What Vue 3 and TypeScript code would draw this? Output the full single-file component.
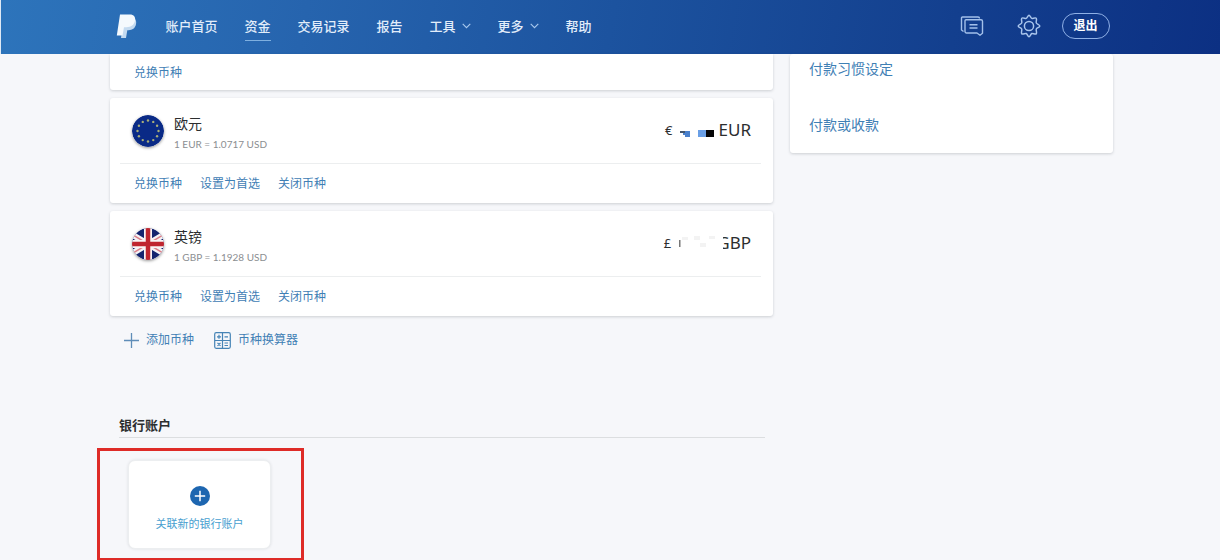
<script setup lang="ts">
interface NavItem {
  label: string
  active?: boolean
  menu?: boolean
}

interface Currency {
  code: 'EUR' | 'GBP'
  name: string
  rate: string
  symbol: string
}

const navItems: NavItem[] = [
  { label: '账户首页' },
  { label: '资金', active: true },
  { label: '交易记录' },
  { label: '报告' },
  { label: '工具', menu: true },
  { label: '更多', menu: true },
  { label: '帮助' },
]

const currencies: Currency[] = [
  { code: 'EUR', name: '欧元', rate: '1 EUR = 1.0717 USD', symbol: '€' },
  { code: 'GBP', name: '英镑', rate: '1 GBP = 1.1928 USD', symbol: '£' },
]

const currencyActions: string[] = ['兑换币种', '设置为首选', '关闭币种']
const sideLinks: string[] = ['付款习惯设定', '付款或收款']

const stars = Array.from({ length: 12 }, (_, i) => {
  const angle = (i * Math.PI) / 6
  return { x: 16 + 10.5 * Math.sin(angle), y: 16 - 10.5 * Math.cos(angle) }
})
</script>

<template>
  <div class="page">
    <header class="topbar">
      <div class="topbar-inner">
        <a href="#" class="logo" aria-label="PayPal">
          <svg width="22" height="26" viewBox="0 0 22 26">
            <path d="M8 4.500h8.800c2.800.8 4 3.400 3.200 6.800-.9 4-3.600 5.900-7.400 5.900H11.300L10 25H5z" fill="#c3daf0" />
            <path d="M4 1.500h9.700c4.300 0 6.100 2.500 5.300 6.300-.9 4.400-4 6.400-8.500 6.400H8L6.500 22.500H.8z" fill="#f4f9fd" />
          </svg>
        </a>
        <nav class="nav">
          <a v-for="item in navItems" :key="item.label" href="#" class="nav-link" :class="{ active: item.active }">
            {{ item.label }}
            <svg v-if="item.menu" class="chevron" width="9" height="6" viewBox="0 0 9 6">
              <path d="M.7.8 4.500 4.600 8.300.8" fill="none" stroke="currentColor" stroke-width="1.100" />
            </svg>
          </a>
        </nav>
        <div class="tools">
          <button type="button" class="icon-button" aria-label="消息">
            <svg width="24" height="22" viewBox="0 0 24 22" fill="none" stroke="#a3c0ea" stroke-width="1.400" stroke-linejoin="round">
              <path d="M3.500 16.500 1.500 15V3a1 1 0 0 1 1-1h15.500a1.500 1.500 0 0 1 1.500 1.500" />
              <path d="M6 4.800h15a1.500 1.500 0 0 1 1.500 1.500v12l-2.500 1.900-3-2.200H6.500A1.500 1.500 0 0 1 5 16.500V5.800A1 1 0 0 1 6 4.800z" />
              <path d="M9.500 9.700h8M9.500 13h8" />
            </svg>
          </button>
          <button type="button" class="icon-button" aria-label="设置">
            <svg width="24" height="24" viewBox="0 0 24 24" fill="none" stroke="#a9c5ec" stroke-width="1.500" stroke-linejoin="round">
              <path d="M12 1.200C13 1.200 13.600 4 14.700 4.400S18.500 3 19.300 4.300 18.700 7.800 19.300 9s3.500 1.700 3.500 3-2.900 1.800-3.500 3 .9 3.500 0 4.700-3.500-.7-4.600-.2-1.500 3.300-2.700 3.300-1.600-2.800-2.700-3.300-3.700 1.400-4.600.2.600-3.500 0-4.700-3.500-1.700-3.500-3S4.100 10.200 4.700 9s-.8-3.500 0-4.700 3.500.5 4.600.1S11 1.200 12 1.200z" />
              <circle cx="12" cy="12" r="4.600" />
            </svg>
          </button>
          <button type="button" class="logout">退出</button>
        </div>
      </div>
    </header>

    <div class="content">
      <main class="main">
        <section class="card partial">
          <div class="actions">
            <a href="#" class="link">兑换币种</a>
          </div>
        </section>

        <section v-for="c in currencies" :key="c.code" class="card">
          <div class="summary">
            <svg v-if="c.code === 'EUR'" class="flag" width="32" height="32" viewBox="0 0 32 32">
              <circle cx="16" cy="16" r="16" fill="#0a2a86" />
              <circle v-for="(s, i) in stars" :key="i" :cx="s.x" :cy="s.y" r="1.200" fill="#a9ae78" />
            </svg>
            <svg v-else class="flag" width="32" height="32" viewBox="0 0 32 32">
              <clipPath id="disc"><circle cx="16" cy="16" r="16" /></clipPath>
              <g clip-path="url(#disc)">
                <path d="M0 0h32v32H0z" fill="#14246f" />
                <path d="M-4 4 36 28M36 4-4 28" stroke="#f5f3f6" stroke-width="6" />
                <path d="M-4 4 36 28M36 4-4 28" stroke="#dc7f88" stroke-width="1.500" />
                <path d="M16 0v32M0 16h32" stroke="#f8f4f5" stroke-width="8" />
                <path d="M16 0v32M0 16h32" stroke="#bf252f" stroke-width="4.500" />
              </g>
            </svg>
            <div class="title">
              <h3 class="name">{{ c.name }}</h3>
              <p class="rate">{{ c.rate }}</p>
            </div>
            <div class="amount">
              <span class="symbol">{{ c.symbol }}</span>
              <svg v-if="c.code === 'EUR'" width="46" height="16" viewBox="0 0 46 16">
                <path d="M9 9h8v6h-5v-2h-2v-2H9z" fill="#4a80cc" />
                <path d="M7 9h5v2H7z" fill="#44566c" />
                <path d="M25 8h8v7h-8z" fill="#6a9fe6" />
                <path d="M33 8h8v7h-8z" fill="#050507" />
              </svg>
              <svg v-else width="46" height="16" viewBox="0 0 46 16">
                <path d="M8 5h1.500v7H8z" fill="#777" />
                <path d="M11 2h6v3h-6zM23 1h6v4h-6zM29 8h6v4h-6zM38 1h6v3h-6z" fill="#f3f3f3" />
              </svg>
              <span class="code" :class="{ clipped: c.code === 'GBP' }">{{ c.code }}</span>
            </div>
          </div>
          <div class="actions">
            <a v-for="a in currencyActions" :key="a" href="#" class="link">{{ a }}</a>
          </div>
        </section>

        <div class="currency-tools">
          <a href="#" class="link with-icon">
            <svg width="15" height="15" viewBox="0 0 15 15">
              <path d="M7.500 0v15M0 7.500h15" stroke="#5f8db8" stroke-width="1.300" />
            </svg>
            添加币种
          </a>
          <a href="#" class="link with-icon">
            <svg width="17" height="17" viewBox="0 0 17 17" fill="none" stroke="#4684b6" stroke-width="1.200">
              <rect x=".7" y=".7" width="15.600" height="15.600" rx="1.500" />
              <path d="M8.500 1v15M1 8.500h15M3 4.800h4M5 2.800v4M10.500 4.800h3.500M3.500 10.800l3 3M6.500 10.800l-3 3M10.500 11h3.500M10.500 13.500h3.500" />
            </svg>
            币种换算器
          </a>
        </div>

        <section class="bank">
          <h2 class="bank-title">银行账户</h2>
          <div class="bank-slot">
            <button type="button" class="bank-add">
              <svg width="20" height="20" viewBox="0 0 20 20">
                <circle cx="10" cy="10" r="10" fill="#1d66b0" />
                <path d="M10 4.800v10.400M4.800 10h10.400" stroke="#fff" stroke-width="1.500" />
              </svg>
              <span>关联新的银行账户</span>
            </button>
            <div class="highlight"></div>
          </div>
        </section>
      </main>

      <aside class="side">
        <a v-for="l in sideLinks" :key="l" href="#" class="side-link">{{ l }}</a>
      </aside>
    </div>
  </div>
</template>

<style>
body {
  margin: 0;
  background: #f6f7fa;
}
</style>

<style scoped>
.page {
  font-family: "Noto Sans", "Noto Sans CJK SC", sans-serif;
  color: #2c2e2f;
}

a {
  text-decoration: none;
}

button {
  font-family: inherit;
  padding: 0;
  cursor: pointer;
}

svg {
  display: block;
  flex: none;
}

.topbar {
  border-left: 1px solid #dfe9f5;
  background: linear-gradient(100deg, #2d74bb 0%, #2664ae 25%, #1c539f 50%, #133f8e 78%, #0c3083 100%);
}

.topbar-inner,
.content {
  box-sizing: border-box;
  max-width: 1006px;
  margin: 0 auto;
  padding-left: 3px;
}

.topbar-inner {
  display: flex;
  align-items: center;
  height: 54px;
  padding: 0 4px 2px 8px;
}

.logo {
  margin-right: 28px;
}

.nav {
  display: flex;
  gap: 27px;
}

.nav-link {
  display: flex;
  align-items: center;
  gap: 6px;
  height: 28px;
  border-bottom: 1px solid transparent;
  font-size: 13px;
  line-height: 28px;
  font-weight: 500;
  color: #e2edfa;
}

.nav-link.active {
  border-bottom-color: #7fb0e0;
}

.chevron {
  color: #a9c9ee;
}

.tools {
  display: flex;
  align-items: center;
  margin-left: auto;
}

.icon-button {
  margin-right: 33px;
  border: 0;
  background: none;
}

.icon-button + .icon-button {
  margin-right: 21px;
}

.logout {
  width: 48px;
  height: 26px;
  border: 1px solid #8fb0e6;
  border-radius: 13px;
  background: transparent;
  font-size: 12px;
  line-height: 24px;
  font-weight: 700;
  color: #fff;
}

.content {
  display: grid;
  grid-template-columns: minmax(0, 663fr) minmax(0, 323fr);
  align-items: start;
  gap: 17px;
}

.card,
.side {
  background: #fff;
  border-radius: 3px;
  box-shadow: 0 1px 3px rgba(40, 50, 60, 0.2);
}

.card {
  margin-bottom: 8px;
  padding: 0 12px 0 10px;
}

.card.partial {
  border-radius: 0 0 3px 3px;
}

.summary {
  display: flex;
  align-items: center;
  height: 65px;
  padding: 0 10px 0 12px;
  border-bottom: 1px solid #eceeef;
}

.flag {
  border-radius: 50%;
  box-shadow: 0 1px 3px rgba(0, 0, 0, 0.4);
}

.title {
  margin-left: 10px;
  padding-top: 4px;
}

.name {
  margin: 0;
  font-size: 14px;
  line-height: 22px;
  font-weight: 400;
}

.rate {
  margin: 0;
  font-family: Lato, "Noto Sans", sans-serif;
  font-size: 10px;
  line-height: 18px;
  color: #8b8e91;
}

.amount {
  display: flex;
  align-items: center;
  margin-left: auto;
  padding-bottom: 2px;
  font-size: 17px;
  line-height: 24px;
}

.symbol {
  font-size: 13px;
}

.code.clipped {
  position: relative;
}

.code.clipped::before {
  content: "";
  position: absolute;
  top: 4px;
  left: 0;
  width: 6px;
  height: 16px;
  background: #fff;
}

.actions {
  display: flex;
  align-items: center;
  box-sizing: border-box;
  gap: 18px;
  height: 39px;
  padding: 1px 0 0 14px;
}

.partial .actions {
  height: 36px;
}

.link {
  font-size: 12px;
  line-height: 18px;
  color: #3f80b5;
}

.currency-tools {
  display: flex;
  gap: 20px;
  padding: 7px 0 0 14px;
}

.with-icon {
  display: flex;
  align-items: center;
  gap: 7px;
}

.bank {
  margin-top: 66px;
}

.bank-title {
  margin: 0 8px 0 9px;
  padding-bottom: 2px;
  border-bottom: 1px solid #dcdee0;
  font-size: 13px;
  line-height: 20px;
  font-weight: 700;
}

.bank-slot {
  position: relative;
  width: 143px;
  margin: 22px 0 0 18px;
  padding-bottom: 12px;
}

.bank-add {
  display: flex;
  flex-direction: column;
  align-items: center;
  justify-content: center;
  gap: 10px;
  width: 100%;
  height: 89px;
  padding-top: 8px;
  border: 1px solid #eceef0;
  border-radius: 7px;
  background: #fff;
  box-shadow: 0 0 3px rgba(40, 50, 60, 0.12);
  font-size: 11px;
  line-height: 16px;
  color: #48a0d0;
}

.highlight {
  position: absolute;
  inset: -12px -33px 0 -31px;
  border: 3px solid #de2b27;
  pointer-events: none;
}

.side {
  display: flex;
  flex-direction: column;
  gap: 34px;
  padding: 4px 19px 17px;
}

.side-link {
  font-size: 14px;
  line-height: 22px;
  color: #3f80b5;
}
</style>
